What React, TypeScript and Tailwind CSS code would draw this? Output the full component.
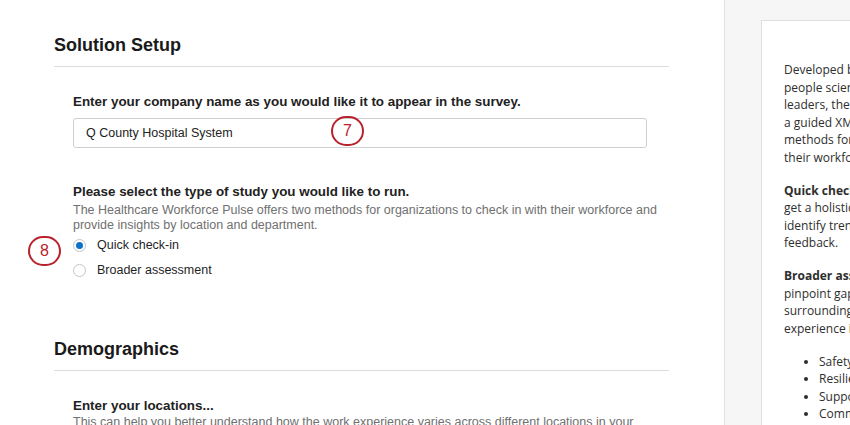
import React from "react";

const Mark = ({ n, className = "" }: { n: string; className?: string }) => (
  <div
    className={`absolute w-[33px] h-[30px] rounded-full border-2 border-[#b8222c] flex items-center justify-center text-[16px] leading-none text-[#b8222c] font-['Liberation_Sans',sans-serif] ${className}`}
  >
    {n}
  </div>
);

const Radio = ({ checked, label }: { checked?: boolean; label: string }) => (
  <label className="h-[25px] flex flex-row items-center gap-[11px]">
    <span className="w-[13px] h-[13px] rounded-full border border-[#c4c4c4] bg-white flex items-center justify-center">
      {checked && <span className="w-[7px] h-[7px] rounded-full bg-[#0b72c9]" />}
    </span>
    <span className="text-[12.5px] text-[#1f1f1f]">{label}</span>
  </label>
);

const Line = ({ children }: { children: React.ReactNode }) => (
  <div className="whitespace-nowrap leading-[17.5px]">{children}</div>
);

const App = () => {
  return (
    <div className="w-[850px] h-[425px] overflow-hidden flex flex-row bg-white font-['Liberation_Sans',Arial,sans-serif]">
      <main className="relative w-[724px] shrink-0 pl-[54px] pt-[34px]">
        <div className="w-[615px]">
          <h2 className="text-[18px] leading-[22px] font-bold text-[#1a1a1a] pb-[10px] border-b border-[#dcdcdc]">
            Solution Setup
          </h2>
          <div className="pl-[19px] pt-[26px]">
            <div className="text-[13.4px] leading-[18px] font-bold text-[#222] whitespace-nowrap">
              Enter your company name as you would like it to appear in the survey.
            </div>
            <div className="mt-[7px] w-[574px] h-[30px] border border-[#cfcfcf] rounded-[3px] flex items-center px-[12px] text-[12.5px] text-[#222]">
              Q County Hospital System
            </div>
            <div className="mt-[35px] text-[13.4px] leading-[18px] font-bold text-[#222] whitespace-nowrap">
              Please select the type of study you would like to run.
            </div>
            <p className="mt-[2px] text-[12.5px] leading-[15px] text-[#707070] whitespace-nowrap">
              The Healthcare Workforce Pulse offers two methods for organizations to check in with their workforce and
              <br />
              provide insights by location and department.
            </p>
            <div className="flex flex-col">
              <Radio checked label="Quick check-in" />
              <Radio label="Broader assessment" />
            </div>
          </div>
          <h2 className="mt-[55px] text-[18px] leading-[22px] font-bold text-[#1a1a1a] pb-[10px] border-b border-[#dcdcdc]">
            Demographics
          </h2>
          <div className="pl-[19px] pt-[26px]">
            <div className="text-[13.4px] leading-[18px] font-bold text-[#222]">Enter your locations...</div>
            <p className="text-[12.5px] leading-[15px] text-[#707070] whitespace-nowrap">
              This can help you better understand how the work experience varies across different locations in your
            </p>
          </div>
        </div>
        <Mark n="7" className="left-[331px] top-[116px]" />
        <Mark n="8" className="left-[28px] top-[236px]" />
      </main>
      <aside className="flex-1 border-l border-[#e2e2e2] bg-[#f6f6f6] pl-[36px] pt-[20px]">
        <div className="w-[400px] h-[500px] bg-white border border-[#dedede] pl-[22px] pt-[40px] text-[12px] text-[#2e2e2e] font-['Open_Sans',sans-serif]">
          <Line>Developed by Qualtrics' team of</Line>
          <Line>people scientists and healthcare</Line>
          <Line>leaders, the Healthcare Workforce Pulse is</Line>
          <Line>a guided XM solution that offers two</Line>
          <Line>methods for organizations to check in with</Line>
          <Line>their workforce.</Line>
          <div className="h-[15.5px]" />
          <Line>
            <b>Quick check-in:</b> a short survey to
          </Line>
          <Line>get a holistic view of the workforce and</Line>
          <Line>identify trends through open-ended</Line>
          <Line>feedback.</Line>
          <div className="h-[15.5px]" />
          <Line>
            <b>Broader assessment:</b> a deeper study to
          </Line>
          <Line>pinpoint gaps and opportunities</Line>
          <Line>surrounding the key drivers of the employee</Line>
          <Line>experience in healthcare:</Line>
          <ul className="mt-[15.5px] pl-[35px] list-disc">
            <li className="whitespace-nowrap leading-[17.5px]">Safety</li>
            <li className="whitespace-nowrap leading-[17.5px]">Resilience</li>
            <li className="whitespace-nowrap leading-[17.5px]">Support</li>
            <li className="whitespace-nowrap leading-[17.5px]">Communication</li>
          </ul>
        </div>
      </aside>
    </div>
  );
};

export default App;
